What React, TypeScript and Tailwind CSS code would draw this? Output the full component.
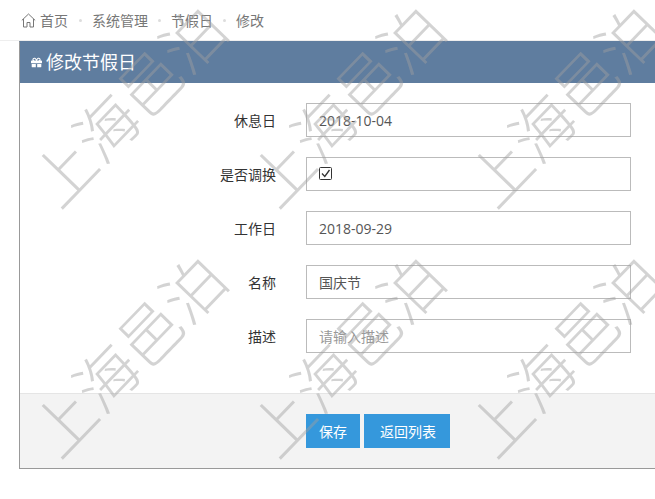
import { FaGift } from "react-icons/fa";

const rows = [
  { label: "休息日", value: "2018-10-04" },
  { label: "是否调换", check: true },
  { label: "工作日", value: "2018-09-29" },
  { label: "名称", value: "国庆节" },
  { label: "描述", placeholder: "请输入描述" },
];
const crumbs = ["系统管理", "节假日", "修改"];
const marks = [0, 1, 2, 3, 4, 5];

export default function App() {
  return (
    <div className="relative h-[499px] w-[655px] overflow-hidden bg-white font-['Open_Sans','Noto_Sans_CJK_SC',sans-serif] text-[14px] text-[#333]">
      <div className="flex h-[41px] items-center gap-[10px] border-b border-[#eeeeee] pl-[21px] text-[#777]">
        <svg width="15" height="15" viewBox="0 0 15 15" fill="none" stroke="#777" strokeWidth="1">
          <path d="M0.8 7.4 L7.5 1 L14.2 7.4 M2.5 6 V14 H6 V9.5 H9 V14 H12.5 V6" />
        </svg>
        <span className="-ml-[6px] mr-[1px]">首页</span>
        {crumbs.map((c) => (
          <div key={c} className="flex items-center gap-[10px]">
            <span className="h-[3px] w-[3px] rounded-full bg-[#dddddd]" />
            <span>{c}</span>
          </div>
        ))}
      </div>
      <div className="ml-[19px] w-[660px] border border-[#999999] border-t-[#5f7d9f]">
        <div className="flex h-[41px] items-center gap-[4px] bg-[#5f7d9f] pl-[11px] text-[18px] text-white">
          <FaGift className="h-[11px] w-[11px]" />
          <span>修改节假日</span>
        </div>
        <div className="flex h-[310px] flex-col gap-[20px] bg-white pt-[20px]">
          {rows.map((r) => (
            <div key={r.label} className="flex h-[34px] items-center">
              <label className="w-[256px] text-right text-[#333]">{r.label}</label>
              <div className="ml-[30px] flex h-[34px] w-[325px] items-center border border-[#bbbbbb] px-[12px]">
                {r.check ? (
                  <svg width="14" height="14" viewBox="0 0 14 14" fill="none" stroke="#333" strokeWidth="1">
                    <rect x="0.5" y="0.5" width="12" height="12" rx="1" />
                    <path d="M3 6.5 L5.8 9.5 L10.5 3" strokeWidth="1.3" />
                  </svg>
                ) : r.placeholder ? (
                  <span className="text-[#999]">{r.placeholder}</span>
                ) : (
                  <span className="text-[#555]">{r.value}</span>
                )}
              </div>
            </div>
          ))}
        </div>
        <div className="flex h-[75px] items-center gap-[4px] border-t border-[#e5e5e5] bg-[#f3f3f3] pl-[286px]">
          <button className="h-[34px] w-[54px] bg-[#3598dc] text-white">保存</button>
          <button className="h-[34px] w-[86px] bg-[#3598dc] pl-[2px] text-white">返回列表</button>
        </div>
      </div>
      <div className="pointer-events-none absolute left-[17px] top-[-22px] grid w-[660px] grid-cols-[218px_218px_218px] grid-rows-[250px_250px]">
        {marks.map((m) => (
          <div key={m} className="flex h-[250px] w-[218px] items-center justify-center">
            <span className="shrink-0 -rotate-[46deg] whitespace-nowrap font-['Noto_Sans_CJK_SC',sans-serif] text-[62px] font-extralight leading-none text-[#a0a0a0] opacity-45">上海邑泊</span>
          </div>
        ))}
      </div>
    </div>
  );
}
